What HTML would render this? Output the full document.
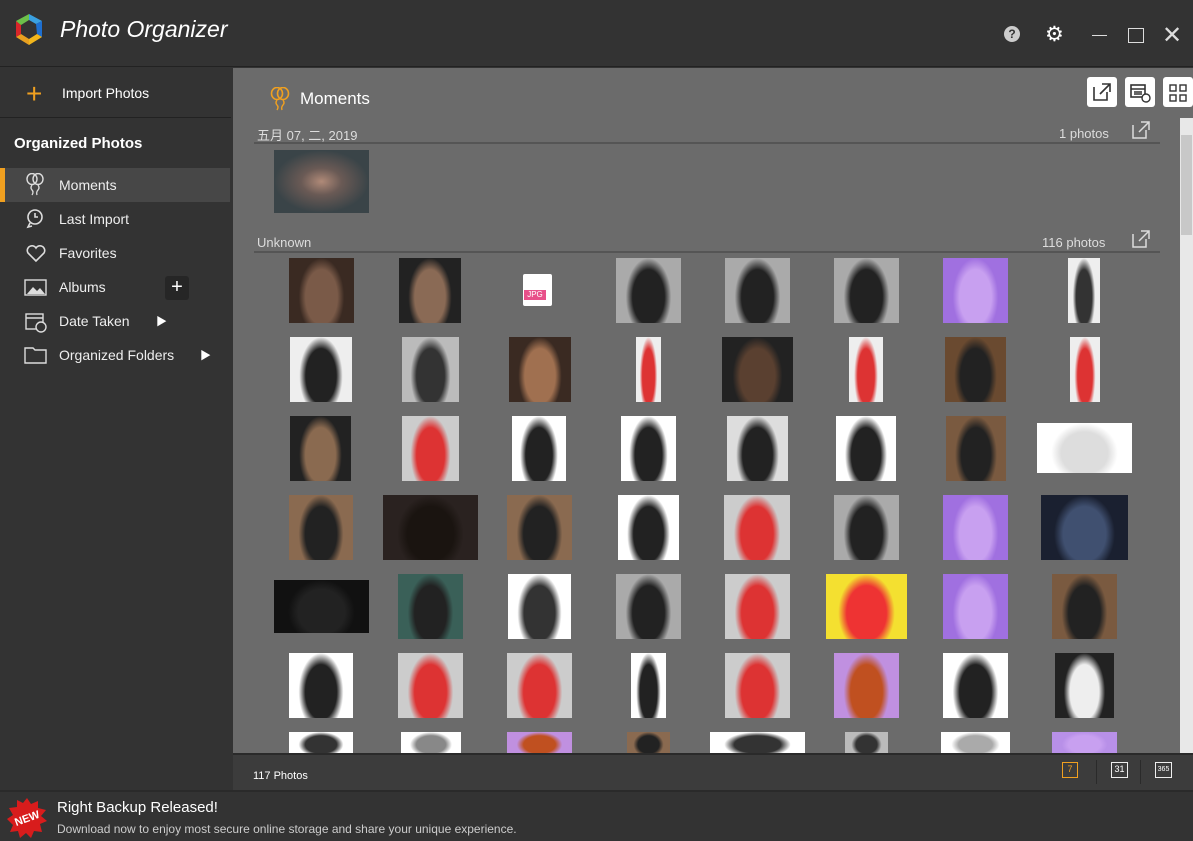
<!DOCTYPE html>
<html><head><meta charset="utf-8"><style>
*{margin:0;padding:0;box-sizing:border-box}
body{width:1193px;height:841px;overflow:hidden;background:#333;font-family:"Liberation Sans","Noto Sans CJK SC",sans-serif;color:#fff;position:relative}
.a{position:absolute}
.t{position:absolute;white-space:nowrap}
.nav{position:absolute;left:0;width:230px;height:34px;font-size:14px;color:#eee}
.nav span{position:absolute;left:59px;top:9px}
.th{position:absolute}
</style></head><body>
<div class="a" style="left:0;top:0;width:1193px;height:67px;background:#333;border-bottom:1px solid #222"></div>
<svg class="a" style="left:12px;top:12px" width="34" height="36" viewBox="0 0 34 36">
<path d="M17 2 L30 9 L24 12 L17 8Z" fill="#3aa0e0"/><path d="M30 9 L30 25 L25 22 L24 12Z" fill="#1e6fd0"/>
<path d="M30 25 L17 33 L17 27 L25 22Z" fill="#f2b61c"/><path d="M17 33 L4 25 L9 22 L17 27Z" fill="#e8a020"/>
<path d="M4 25 L4 9 L9 13 L9 22Z" fill="#d8262a"/><path d="M4 9 L17 2 L17 8 L9 13Z" fill="#6cc04a"/></svg>
<div class="t" style="left:60px;top:16px;font-size:23px;font-style:italic;color:#fff">Photo Organizer</div>
<div class="a" style="left:1004px;top:26px;width:16px;height:16px;border-radius:50%;background:#ccc;color:#333;font-size:12px;font-weight:bold;text-align:center;line-height:16px">?</div>
<div class="t" style="left:1045px;top:22px;font-size:21px;color:#fff">⚙</div>
<div class="a" style="left:1092px;top:35px;width:15px;height:1px;background:#ddd"></div>
<div class="a" style="left:1128px;top:28px;width:16px;height:15px;border:1px solid #ddd"></div>
<div class="t" style="left:1162px;top:21px;font-size:24px;color:#ddd;font-weight:200">✕</div>
<div class="a" style="left:0;top:68px;width:233px;height:722px;background:#333"></div>
<div class="t" style="left:26px;top:78px;font-size:28px;color:#f0a020;font-weight:300">+</div>
<div class="t" style="left:62px;top:85px;font-size:14px">Import Photos</div>
<div class="a" style="left:0;top:117px;width:231px;height:1px;background:#222"></div>
<div class="t" style="left:14px;top:135px;font-size:15px;font-weight:bold">Organized Photos</div>
<div class="nav" style="top:168px;background:#474747"><div class="a" style="left:0;top:0;width:5px;height:34px;background:#f0a020"></div><span>Moments</span></div>
<div class="nav" style="top:202px"><span>Last Import</span></div>
<div class="nav" style="top:236px"><span>Favorites</span></div>
<div class="nav" style="top:270px"><span>Albums</span></div>
<div class="nav" style="top:304px"><span>Date Taken</span></div>
<div class="nav" style="top:338px"><span>Organized Folders</span></div>
<svg class="a" style="left:26px;top:173px" width="18" height="24"><ellipse cx="6" cy="6" rx="5" ry="5.5" fill="none" stroke="#ddd" stroke-width="1.4"/><ellipse cx="12" cy="6" rx="5" ry="5.5" fill="none" stroke="#ddd" stroke-width="1.4"/><path d="M6 12Q4 15 6 17T6 22M12 12Q14 15 12 17T11 22" fill="none" stroke="#ddd" stroke-width="1.3"/></svg>
<svg class="a" style="left:25px;top:208px" width="20" height="22"><circle cx="10" cy="9" r="7" fill="none" stroke="#ddd" stroke-width="1.6"/><path d="M10 5V9H13M5 15L3 19L7 18" fill="none" stroke="#ddd" stroke-width="1.6"/></svg>
<svg class="a" style="left:25px;top:244px" width="22" height="19"><path d="M11 17L3 9A4.5 4.5 0 0 1 11 4A4.5 4.5 0 0 1 19 9Z" fill="none" stroke="#ddd" stroke-width="1.6"/></svg>
<svg class="a" style="left:24px;top:279px" width="23" height="17"><rect x="1" y="1" width="21" height="15" fill="none" stroke="#ddd" stroke-width="1.4"/><path d="M3 15L9 8L13 12L16 9L21 15Z" fill="#ddd"/></svg>
<div class="a" style="left:165px;top:276px;width:24px;height:24px;background:#262626;border-radius:3px;color:#fff;text-align:center;font-size:20px;line-height:23px">+</div>
<svg class="a" style="left:25px;top:311px" width="22" height="22"><rect x="1" y="3" width="17" height="15" fill="none" stroke="#ddd" stroke-width="1.4"/><path d="M1 7H18" stroke="#ddd" stroke-width="1.4"/><circle cx="16" cy="16" r="5" fill="#333" stroke="#ddd" stroke-width="1.4"/></svg>
<svg class="a" style="left:24px;top:346px" width="23" height="18"><path d="M1 2H9L11 4H22V17H1Z" fill="none" stroke="#ddd" stroke-width="1.4"/></svg>
<div class="t" style="left:156px;top:313px;font-size:11px;color:#fff">▶</div>
<div class="t" style="left:200px;top:347px;font-size:11px;color:#fff">▶</div>
<div class="a" style="left:233px;top:68px;width:960px;height:685px;background:#6b6b6b"></div>
<svg class="a" style="left:270px;top:87px" width="20" height="25"><ellipse cx="7" cy="6.5" rx="5.5" ry="6" fill="none" stroke="#f0a020" stroke-width="1.6"/><ellipse cx="13" cy="6.5" rx="5.5" ry="6" fill="none" stroke="#f0a020" stroke-width="1.6"/><path d="M7 13Q5 16 7 18T7 23M13 13Q15 16 13 18T12 23" fill="none" stroke="#f0a020" stroke-width="1.4"/></svg>
<div class="t" style="left:300px;top:89px;font-size:17px;color:#fff">Moments</div>
<div class="a" style="left:1087px;top:77px;width:30px;height:30px;background:#fff;border-radius:3px"></div>
<div class="a" style="left:1125px;top:77px;width:30px;height:30px;background:#fff;border-radius:3px"></div>
<div class="a" style="left:1163px;top:77px;width:30px;height:30px;background:#fff;border-radius:3px"></div>
<svg class="a" style="left:1093px;top:83px" width="18" height="18"><path d="M1 4V17H14V9M9 1H17V9M17 1L7 11" fill="none" stroke="#333" stroke-width="1.6"/></svg>
<svg class="a" style="left:1130px;top:83px" width="22" height="20"><rect x="1" y="2" width="14" height="12" fill="none" stroke="#333" stroke-width="1.6"/><path d="M1 6H15M4 9H12M4 11H12" stroke="#333" stroke-width="1.4"/><circle cx="16" cy="15" r="4" fill="#fff" stroke="#333" stroke-width="1.4"/></svg>
<svg class="a" style="left:1169px;top:84px" width="18" height="18"><rect x="1" y="1" width="6" height="6" fill="none" stroke="#333" stroke-width="1.4"/><rect x="11" y="1" width="6" height="6" fill="none" stroke="#333" stroke-width="1.4"/><rect x="1" y="11" width="6" height="6" fill="none" stroke="#333" stroke-width="1.4"/><rect x="11" y="11" width="6" height="6" fill="none" stroke="#333" stroke-width="1.4"/></svg>
<div class="a" style="left:254px;top:142px;width:906px;height:2px;background:#555"></div>
<div class="t" style="left:257px;top:125px;font-size:13px;color:#ddd">五月 07, 二, 2019</div>
<div class="t" style="left:1059px;top:126px;font-size:13px;color:#ddd">1 photos</div>
<div class="a" style="left:274px;top:150px;width:95px;height:63px;background:radial-gradient(ellipse at 50% 50%,#b08a78 0,#6a5a55 30%,#3a4448 70%)"></div>
<div class="a" style="left:254px;top:251px;width:906px;height:2px;background:#555"></div>
<div class="t" style="left:257px;top:235px;font-size:13px;color:#ddd">Unknown</div>
<div class="t" style="left:1042px;top:235px;font-size:13px;color:#ddd">116 photos</div>
<svg class="a" style="left:1132px;top:121px" width="18" height="18"><path d="M1 4V17H14V9M9 1H17V9M17 1L7 11" fill="none" stroke="#ddd" stroke-width="1.5"/></svg>
<svg class="a" style="left:1132px;top:230px" width="18" height="18"><path d="M1 4V17H14V9M9 1H17V9M17 1L7 11" fill="none" stroke="#ddd" stroke-width="1.5"/></svg>
<div class="a" style="left:1180px;top:118px;width:13px;height:635px;background:#e8e8e8"></div>
<div class="a" style="left:1181px;top:135px;width:11px;height:100px;background:#c8c8c8"></div>
<div id="g"></div>
<div class="a" style="left:233px;top:753px;width:960px;height:37px;background:#3c3c3c;border-top:2px solid #2a2a2a"></div>
<div class="t" style="left:253px;top:770px;font-size:11px">117 Photos</div>
<div class="a" style="left:1062px;top:762px;width:16px;height:16px;border:1.5px solid #f0a020;color:#f0a020;font-size:9px;text-align:center;line-height:13px">7</div>
<div class="a" style="left:1111px;top:762px;width:17px;height:16px;border:1.5px solid #eee;font-size:9px;text-align:center;line-height:13px">31</div>
<div class="a" style="left:1155px;top:762px;width:17px;height:16px;border:1.5px solid #eee;font-size:7px;text-align:center;line-height:13px">365</div>
<div class="a" style="left:1096px;top:760px;width:1px;height:24px;background:#2a2a2a"></div>
<div class="a" style="left:1140px;top:760px;width:1px;height:24px;background:#2a2a2a"></div>
<div class="a" style="left:0;top:790px;width:1193px;height:51px;background:#333;border-top:2px solid #2a2a2a"></div>
<svg class="a" style="left:6px;top:797px" width="42" height="42" viewBox="0 0 42 42"><polygon points="21,1 25,7 32,4 32,11 40,13 35,19 41,24 34,27 36,35 28,34 25,41 20,36 14,41 12,34 4,35 7,28 1,22 7,18 3,11 11,10 11,3 17,6" fill="#d81c1c"/><text x="21" y="25" font-size="11" font-weight="bold" fill="#fff" text-anchor="middle" font-family="Liberation Sans" transform="rotate(-20 21 21)">NEW</text></svg>
<div class="t" style="left:57px;top:799px;font-size:15px">Right Backup Released!</div>
<div class="t" style="left:57px;top:822px;font-size:12px;color:#ccc">Download now to enjoy most secure online storage and share your unique experience.</div>
<div class="th" style="left:523px;top:274px;width:29px;height:32px;background:#fff;border-radius:2px"></div>
<div class="th" style="left:524px;top:290px;width:22px;height:10px;background:#e8508a;font-size:8px;color:#fff;text-align:center;line-height:10px">JPG</div>
<script>
var D=[
[289,258,65,65,'#3a2a22','#7a5a48'],[399,258,62,65,'#222','#8a6a55'],[616,258,65,65,'#aaa','#222'],[725,258,65,65,'#aaa','#222'],[834,258,65,65,'#aaa','#222'],[943,258,65,65,'#a070e0','#c8a0f0'],[1068,258,32,65,'#eee','#333'],
[290,337,62,65,'#eee','#222'],[402,337,57,65,'#bbb','#333'],[509,337,62,65,'#3a2a22','#a07050'],[636,337,25,65,'#eee','#d33'],[722,337,71,65,'#222','#5a4030'],[849,337,34,65,'#eee','#d33'],[945,337,61,65,'#6a4a30','#222'],[1070,337,30,65,'#eee','#d33'],
[290,416,61,65,'#222','#8a6a50'],[402,416,57,65,'#ccc','#d33'],[512,416,54,65,'#fff','#222'],[621,416,55,65,'#fff','#222'],[727,416,61,65,'#ddd','#222'],[836,416,60,65,'#fff','#222'],[946,416,60,65,'#7a5a40','#222'],[1037,423,95,50,'#fff','#ddd'],
[289,495,64,65,'#8a6a50','#222'],[383,495,95,65,'#2a2220','#1a1410'],[507,495,65,65,'#8a6a50','#222'],[618,495,61,65,'#fff','#222'],[724,495,66,65,'#ccc','#d33'],[834,495,65,65,'#aaa','#222'],[943,495,65,65,'#a070e0','#c8a0f0'],[1041,495,87,65,'#1a2030','#405070'],
[274,580,95,53,'#111','#222'],[398,574,65,65,'#3a6058','#222'],[508,574,63,65,'#fff','#333'],[616,574,65,65,'#aaa','#222'],[725,574,65,65,'#ccc','#d33'],[826,574,81,65,'#f4e030','#e33'],[943,574,65,65,'#a070e0','#c8a0f0'],[1052,574,65,65,'#7a5a40','#222'],
[289,653,64,65,'#fff','#222'],[398,653,65,65,'#ccc','#d33'],[507,653,65,65,'#ccc','#d33'],[631,653,35,65,'#fff','#222'],[725,653,65,65,'#ccc','#d33'],[834,653,65,65,'#c090e0','#c05020'],[943,653,65,65,'#fff','#222'],[1055,653,59,65,'#222','#eee'],
[289,732,64,21,'#fff','#333'],[401,732,60,21,'#fff','#888'],[507,732,65,21,'#c090e0','#c05020'],[627,732,43,21,'#8a6a50','#222'],[710,732,95,21,'#fff','#333'],[845,732,43,21,'#bbb','#333'],[941,732,69,21,'#fff','#aaa'],[1052,732,65,21,'#b890e8','#c8a0f0']];
var h='';D.forEach(function(d){h+='<div class="th" style="left:'+d[0]+'px;top:'+d[1]+'px;width:'+d[2]+'px;height:'+d[3]+'px;background:radial-gradient(ellipse 35% 60% at 50% 60%,'+d[5]+' 0,'+d[5]+' 70%,'+d[4]+' 100%)"></div>'});
document.getElementById('g').innerHTML=h;
</script>
</body></html>
